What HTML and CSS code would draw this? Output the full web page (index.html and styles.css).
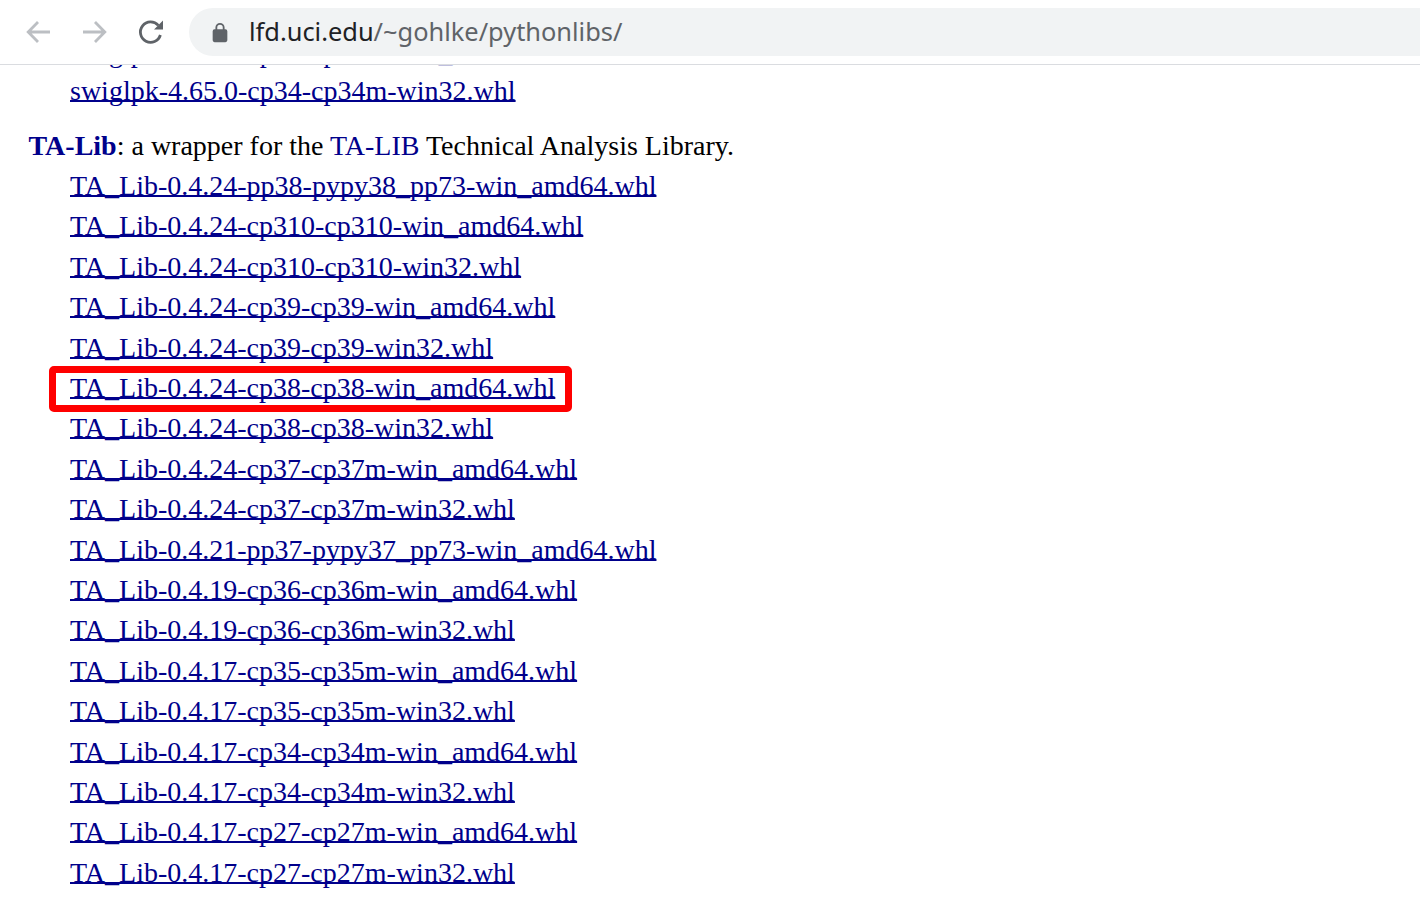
FILE: index.html
```html
<!DOCTYPE html>
<html lang="en">
<head>
<meta charset="utf-8">
<title>Python Extension Packages</title>
<link rel="stylesheet" href="styles.css">
</head>
<body>
<header class="toolbar">
  <svg class="nav-icon" viewBox="0 0 29 29"><path d="M26 14H5M14 4l-9.800 10L14 24" fill="none" stroke="#bcbfc3" stroke-width="2.800"/></svg>
  <svg class="nav-icon" viewBox="0 0 29 29"><path d="M3 14h21M15 4l9.800 10L15 24" fill="none" stroke="#bcbfc3" stroke-width="2.800"/></svg>
  <svg class="nav-icon" viewBox="0 0 29 29"><path d="M22.300 7.400A10.200 10.200 0 1 0 24.400 17" fill="none" stroke="#5f6368" stroke-width="2.800"/><path d="M27 2.500V11.500H18z" fill="#5f6368"/></svg>
  <div class="omnibox">
    <svg class="lock" viewBox="0 0 24 24"><path d="M18 8h-1V6a5 5 0 0 0-10 0v2H6a2 2 0 0 0-2 2v10a2 2 0 0 0 2 2h12a2 2 0 0 0 2-2V10a2 2 0 0 0-2-2zM9 6a3 3 0 0 1 6 0v2H9z" fill="#5f6368"/></svg>
    <span class="url"><span class="host">lfd.uci.edu</span>/~gohlke/pythonlibs/</span>
  </div>
</header>
<main class="page">
  <div class="prior"><a href="#">swiglpk-4.65.0-cp34-cp34m-win_amd64.whl</a></div>
  <div class="last"><a href="#">swiglpk-4.65.0-cp34-cp34m-win32.whl</a></div>
  <p class="intro"><a href="#" class="plain"><strong>TA-Lib</strong></a>: a wrapper for the <a href="#" class="plain">TA-LIB</a> Technical Analysis Library.</p>
  <ul class="files">
    <li><a href="#">TA_Lib-0.4.24-pp38-pypy38_pp73-win_amd64.whl</a></li>
    <li><a href="#">TA_Lib-0.4.24-cp310-cp310-win_amd64.whl</a></li>
    <li><a href="#">TA_Lib-0.4.24-cp310-cp310-win32.whl</a></li>
    <li><a href="#">TA_Lib-0.4.24-cp39-cp39-win_amd64.whl</a></li>
    <li><a href="#">TA_Lib-0.4.24-cp39-cp39-win32.whl</a></li>
    <li class="marked"><a href="#">TA_Lib-0.4.24-cp38-cp38-win_amd64.whl</a></li>
    <li><a href="#">TA_Lib-0.4.24-cp38-cp38-win32.whl</a></li>
    <li><a href="#">TA_Lib-0.4.24-cp37-cp37m-win_amd64.whl</a></li>
    <li><a href="#">TA_Lib-0.4.24-cp37-cp37m-win32.whl</a></li>
    <li><a href="#">TA_Lib-0.4.21-pp37-pypy37_pp73-win_amd64.whl</a></li>
    <li><a href="#">TA_Lib-0.4.19-cp36-cp36m-win_amd64.whl</a></li>
    <li><a href="#">TA_Lib-0.4.19-cp36-cp36m-win32.whl</a></li>
    <li><a href="#">TA_Lib-0.4.17-cp35-cp35m-win_amd64.whl</a></li>
    <li><a href="#">TA_Lib-0.4.17-cp35-cp35m-win32.whl</a></li>
    <li><a href="#">TA_Lib-0.4.17-cp34-cp34m-win_amd64.whl</a></li>
    <li><a href="#">TA_Lib-0.4.17-cp34-cp34m-win32.whl</a></li>
    <li><a href="#">TA_Lib-0.4.17-cp27-cp27m-win_amd64.whl</a></li>
    <li><a href="#">TA_Lib-0.4.17-cp27-cp27m-win32.whl</a></li>
  </ul>
</main>
</body>
</html>
```
FILE: styles.css
```css
html, body { margin: 0; padding: 0; height: 900px; overflow: hidden; background: #fff; }
body { font-family: "Liberation Serif", "Times New Roman", serif; font-size: 28px; color: #000; display: flex; flex-direction: column; }
.toolbar { flex: none; height: 64px; border-bottom: 1px solid #dadce0; display: flex; align-items: center; padding-left: 24px; background: #fff; }
.nav-icon { width: 29px; height: 29px; margin-right: 27px; flex: none; }
.nav-icon:nth-of-type(3) { margin-right: 24px; }
.omnibox { flex: 1; height: 48px; background: #f1f3f4; border-radius: 24px 0 0 24px; display: flex; align-items: center; padding-left: 20px; }
.lock { width: 22px; height: 22px; margin: 2px 18px 0 0; }
.url { font-family: "Noto Sans", Arial, sans-serif; font-size: 25.4px; color: #5f6368; padding-bottom: 2px; }
.host { color: #202124; }
.page { flex: 1; overflow: hidden; padding-left: 28.5px; font-size: 28px; line-height: 40.4px; }
a { color: #00008b; text-decoration-thickness: 2px; text-decoration-skip-ink: none; text-underline-offset: 0; }
a.plain { text-decoration: none; }
.prior { padding-left: 41.5px; margin: -32.2px 0 -2.4px; }
.last { padding-left: 41.5px; margin-bottom: 14.4px; }
.intro { margin: 0; height: 40.25px; }
.files { list-style: none; margin: 0; padding: 0 0 0 41.5px; }
.marked { position: relative; }
.marked::after { content: ""; position: absolute; left: -21px; top: -2px; width: 523px; height: 46px; box-sizing: border-box; border: 7px solid #f00; border-radius: 5px; }
```
